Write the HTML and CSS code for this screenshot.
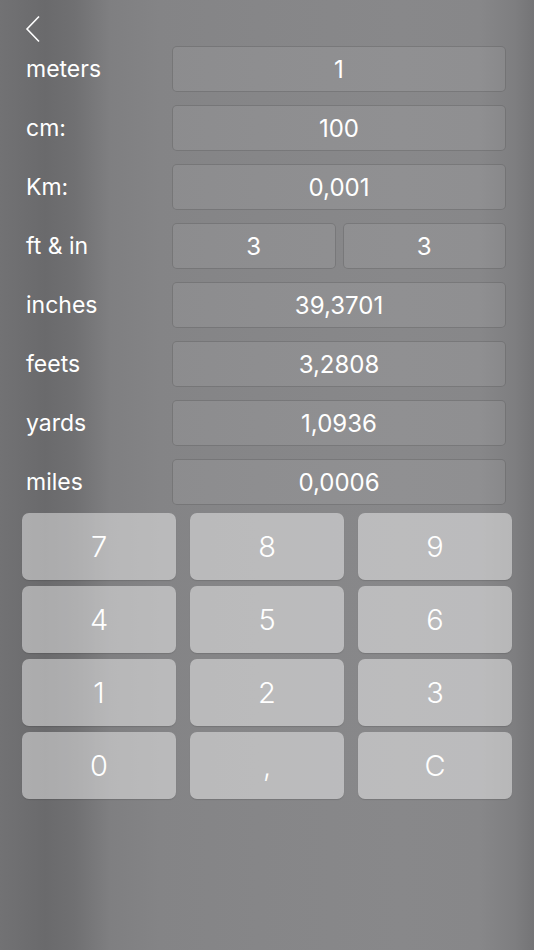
FILE: index.html
```html
<!DOCTYPE html>
<html>
<head>
<meta charset="utf-8">
<link rel="stylesheet" href="styles.css">
</head>
<body>
<div class="screen">
  <div class="nav">
    <svg class="back" width="18" height="28" viewBox="0 0 18 28"><polyline points="15,1.5 3,14 15,26.5" fill="none" stroke="#fff" stroke-width="1.6"/></svg>
  </div>
  <div class="rows">
    <div class="row"><span class="label">meters</span><div class="fields"><div class="field">1</div></div></div>
    <div class="row"><span class="label">cm:</span><div class="fields"><div class="field">100</div></div></div>
    <div class="row"><span class="label">Km:</span><div class="fields"><div class="field">0,001</div></div></div>
    <div class="row"><span class="label">ft &amp; in</span><div class="fields split"><div class="field">3</div><div class="field">3</div></div></div>
    <div class="row"><span class="label">inches</span><div class="fields"><div class="field">39,3701</div></div></div>
    <div class="row"><span class="label">feets</span><div class="fields"><div class="field">3,2808</div></div></div>
    <div class="row"><span class="label">yards</span><div class="fields"><div class="field">1,0936</div></div></div>
    <div class="row"><span class="label">miles</span><div class="fields"><div class="field">0,0006</div></div></div>
  </div>
  <div class="keypad">
    <div class="key">7</div><div class="key">8</div><div class="key">9</div>
    <div class="key">4</div><div class="key">5</div><div class="key">6</div>
    <div class="key">1</div><div class="key">2</div><div class="key">3</div>
    <div class="key">0</div><div class="key">,</div><div class="key">C</div>
  </div>
</div>
</body>
</html>
```
FILE: styles.css
```css
html, body {
  margin: 0;
  padding: 0;
}
body {
  width: 534px;
  height: 950px;
  overflow: hidden;
  font-family: Inter, "Liberation Sans", sans-serif;
  color: #fff;
  background: linear-gradient(to right,
    #727274 0px,
    #6a6a6c 45px,
    #707072 75px,
    #7f7f81 110px,
    #848486 160px,
    #868688 260px,
    #88888a 400px,
    #878789 480px,
    #7e7e80 515px,
    #747476 534px);
}
.screen {
  display: flex;
  flex-direction: column;
}
.nav {
  height: 46px;
  padding-left: 24px;
  box-sizing: border-box;
  padding-top: 15px;
}
.back {
  display: block;
}
.rows {
  display: flex;
  flex-direction: column;
  gap: 13px;
  padding: 0 28px 0 26px;
}
.row {
  display: flex;
  align-items: center;
  height: 46px;
}
.label {
  width: 146px;
  font-size: 23px;
}
.fields {
  flex: 1;
  display: flex;
  gap: 7px;
  height: 100%;
}
.field {
  flex: 1;
  display: flex;
  align-items: center;
  justify-content: center;
  box-sizing: border-box;
  border: 1px solid rgba(0, 0, 0, 0.16);
  border-radius: 5px;
  background: rgba(255, 255, 255, 0.07);
  font-size: 24px;
}
.keypad {
  margin-top: 8px;
  padding: 0 22px;
  display: grid;
  grid-template-columns: repeat(3, 1fr);
  column-gap: 14px;
  row-gap: 6px;
}
.key {
  height: 67px;
  border-radius: 7px;
  background: rgba(255, 255, 255, 0.44);
  box-shadow: 0 1px 1px rgba(0, 0, 0, 0.12);
  display: flex;
  align-items: center;
  justify-content: center;
  font-size: 29px;
  font-weight: 300;
}
```
